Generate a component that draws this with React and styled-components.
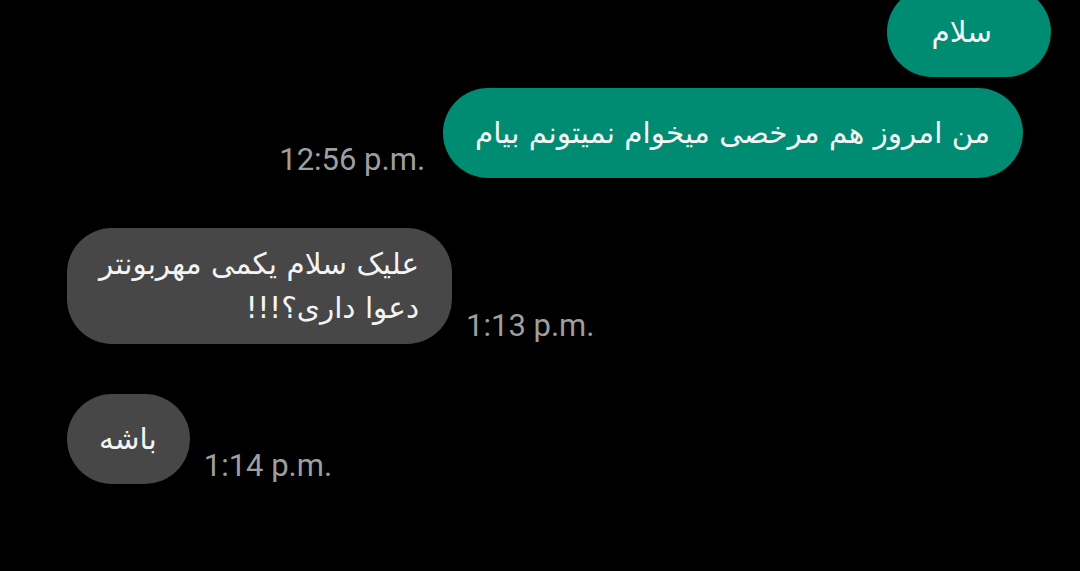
import React from 'react';
import styled, { createGlobalStyle } from 'styled-components';

const GlobalStyle = createGlobalStyle`
  html, body {
    margin: 0;
    padding: 0;
    background: #000;
    overflow: hidden;
  }
`;

const Screen = styled.div`
  width: 1080px;
  height: 571px;
  background: #000;
  overflow: hidden;
`;

// the thread is scrolled a little, so the first bubble is cut at the top
const Thread = styled.div`
  display: flex;
  flex-direction: column;
  margin-top: -13px;
  padding: 0 57px 0 67px;
`;

const Row = styled.div`
  display: flex;
  align-items: flex-end;
  justify-content: flex-start;
  flex-direction: ${(p) => (p.$mine ? 'row-reverse' : 'row')};
  gap: ${(p) => (p.$mine ? '18px' : '14px')};
  margin-top: ${(p) => p.$gap || 0}px;
  margin-right: ${(p) => p.$shift || 0}px;
`;

const Bubble = styled.div`
  display: flex;
  align-items: center;
  box-sizing: border-box;
  min-height: 90px;
  padding: ${(p) => p.$pad || '14px 33px 14px 32px'};
  border-radius: 45px;
  background: ${(p) => (p.$mine ? '#008c72' : '#474747')};
  color: #f4f4f4;
  font-family: "DejaVu Sans", "Noto Sans", sans-serif;
  font-size: 29.5px;
  line-height: 44px;
  direction: rtl;
  text-align: right;
  white-space: nowrap;
`;

const Time = styled.span`
  font-family: Roboto, "Liberation Sans", sans-serif;
  font-size: 31px;
  line-height: 1;
  color: #9e9e9e;
  padding-bottom: 3px;
  white-space: nowrap;
`;

const messages = [
  { id: 1, mine: true, lines: ['سلام'], shift: -28, pad: '14px 59px 14px 44px' },
  { id: 2, mine: true, lines: ['من امروز هم مرخصی میخوام نمیتونم بیام'], time: '12:56 p.m.', gap: 11 },
  { id: 3, mine: false, lines: ['علیک سلام یکمی مهربونتر', 'دعوا داری؟!!!'], time: '1:13 p.m.', gap: 50 },
  { id: 4, mine: false, lines: ['باشه'], time: '1:14 p.m.', gap: 50 },
];

export default function App() {
  return (
    <Screen>
      <GlobalStyle />
      <Thread>
        {messages.map((m) => (
          <Row key={m.id} $mine={m.mine} $gap={m.gap} $shift={m.shift}>
            <Bubble $mine={m.mine} $pad={m.pad}>
              <div>
                {m.lines.map((l, i) => (
                  <div key={i}>{l}</div>
                ))}
              </div>
            </Bubble>
            {m.time && <Time>{m.time}</Time>}
          </Row>
        ))}
      </Thread>
    </Screen>
  );
}
